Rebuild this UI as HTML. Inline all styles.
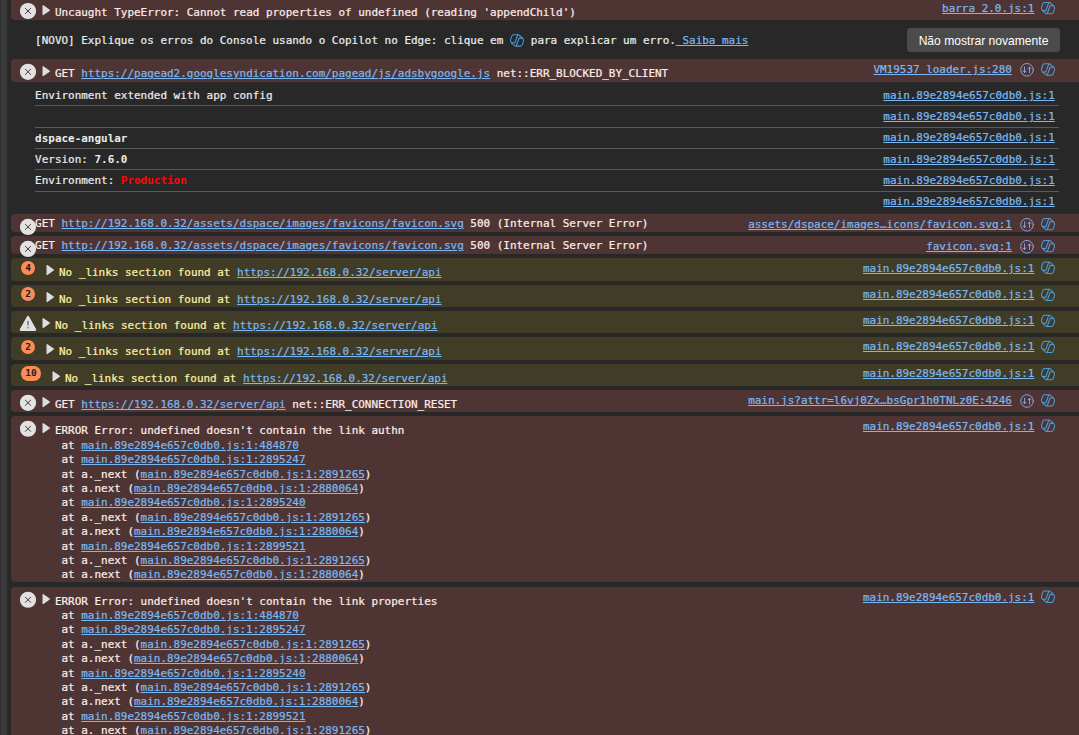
<!DOCTYPE html>
<html lang="pt-BR"><head><meta charset="utf-8"><title>DevTools Console</title>
<style>
html,body{margin:0;padding:0}
body{width:1079px;height:735px;overflow:hidden;background:#282828;position:relative;font-family:"DejaVu Sans Mono","Liberation Mono",monospace;font-size:10.96px;line-height:14.4px;color:#ebebeb}
.gutter{position:absolute;left:0;top:0;width:8px;height:735px;background:linear-gradient(90deg,#313131 0,#313131 0.7px,#3b3b3b 0.7px,#3b3b3b 6.2px,#303030 7px,#282828 7.7px)}
.row{position:absolute;left:11px;width:1080px;border-radius:4px 0 0 4px}
.err{background:#4e3534}
.warn{background:#413c26}
.t{position:absolute;white-space:pre;height:14.4px;-webkit-text-stroke:0.22px currentColor}
.t b{-webkit-text-stroke:0}
.t.e{color:#fdecea}
.t.w{color:#fdf1a8}
.lk{color:#7ab8f3;text-decoration:underline;text-underline-offset:0.5px;text-decoration-thickness:1px}
.ic{position:absolute;overflow:visible}
.sep{position:absolute;left:35px;width:1024px;height:1px;background:#5a5a5a}
.badge{position:absolute;height:14.5px;border-radius:7.25px;background:#fa8c57;color:#1b1b2a;font:bold 9.5px/14.5px "DejaVu Sans Mono",monospace;text-align:center}
.btn{position:absolute;left:907px;top:28px;width:153px;height:24px;border-radius:3px;background:#4b4b4b;color:#fff;font:12.1px/26px "Liberation Sans",sans-serif;text-align:center;box-sizing:border-box;padding-left:0}
b{font-weight:bold}
</style></head>
<body>
<div class="gutter"></div>
<div class="row err" style="top:-2.6px;height:22.3px"></div>
<svg class="ic" style="left:19px;top:2px" width="18" height="18" viewBox="0 0 18 18" ><g transform="translate(0.50 0.50)"><circle cx="8.5" cy="8.5" r="8.1" fill="#e2e2e2"/><path d="M5.9 5.9l5.2 5.2M11.1 5.9l-5.2 5.2" stroke="#4a3837" stroke-width="1" stroke-linecap="round" fill="none"/></g></svg>
<svg class="ic" style="left:42px;top:4px" width="10" height="13" viewBox="0 0 10 13" ><g transform="translate(0.00 0.20)"><path d="M1.1 1.6 L7.4 6 L1.1 10.4 Z" fill="#dedede" stroke="#dedede" stroke-width="1.2" stroke-linejoin="round"/></g></svg>
<div class="t e" style="left:54.9px;top:6.00px;">Uncaught TypeError: Cannot read properties of undefined (reading 'appendChild')</div>
<div class="t " style="right:44.60px;top:1.50px;"><span class="lk">barra 2.0.js:1</span></div>
<svg class="ic" style="left:1040px;top:0px" width="17" height="17" viewBox="0 0 17 17" fill="none" stroke="#489ddc" stroke-width="1.05" stroke-linecap="round" stroke-linejoin="round"><g transform="translate(0.00 0.10)"><path d="M4.4 2.3 H9.6 L13.6 5.7 Q14.9 7 14.4 9 L13.4 12 Q12.8 13.7 11.4 13.7 H6.4 L2.4 10.4 Q1.1 9 1.6 7 L2.7 4 Q3.2 2.3 4.4 2.3 Z"/><path d="M8.7 2.7 L5.9 10.4 H2.6"/><path d="M7.3 13.4 L10.1 5.7 H13.4"/></g></svg>
<div class="t " style="left:35.1px;top:34.20px;">[NOVO] Explique os erros do Console usando o Copilot no Edge: clique em <span style="display:inline-block;width:14.3px"></span> para explicar um erro.<span class="lk"> Saiba mais</span></div>
<svg class="ic" style="left:509px;top:32px" width="17" height="17" viewBox="0 0 17 17" fill="none" stroke="#489ddc" stroke-width="1.05" stroke-linecap="round" stroke-linejoin="round"><g transform="translate(0.00 0.40)"><path d="M4.4 2.3 H9.6 L13.6 5.7 Q14.9 7 14.4 9 L13.4 12 Q12.8 13.7 11.4 13.7 H6.4 L2.4 10.4 Q1.1 9 1.6 7 L2.7 4 Q3.2 2.3 4.4 2.3 Z"/><path d="M8.7 2.7 L5.9 10.4 H2.6"/><path d="M7.3 13.4 L10.1 5.7 H13.4"/></g></svg>
<div class="btn">Não mostrar novamente</div>
<div class="row err" style="top:59px;height:22.900000000000006px"></div>
<svg class="ic" style="left:19px;top:63px" width="18" height="18" viewBox="0 0 18 18" ><g transform="translate(0.50 0.30)"><circle cx="8.5" cy="8.5" r="8.1" fill="#e2e2e2"/><path d="M5.9 5.9l5.2 5.2M11.1 5.9l-5.2 5.2" stroke="#4a3837" stroke-width="1" stroke-linecap="round" fill="none"/></g></svg>
<svg class="ic" style="left:42px;top:65px" width="10" height="13" viewBox="0 0 10 13" ><g transform="translate(0.00 0.20)"><path d="M1.1 1.6 L7.4 6 L1.1 10.4 Z" fill="#dedede" stroke="#dedede" stroke-width="1.2" stroke-linejoin="round"/></g></svg>
<div class="t e" style="left:54.9px;top:67.00px;">GET <span class="lk">https://pagead2.googlesyndication.com/pagead/js/adsbygoogle.js</span> net::ERR_BLOCKED_BY_CLIENT</div>
<div class="t " style="right:67.10px;top:63.00px;"><span class="lk">VM19537 loader.js:280</span></div>
<svg class="ic" style="left:1019px;top:61px" width="17" height="17" viewBox="0 0 17 17" fill="none" stroke="#8caaf5" stroke-width="0.9" stroke-linecap="round" stroke-linejoin="round"><g transform="translate(0.00 0.80)"><circle cx="8" cy="8" r="6.3"/><path d="M5.5 5.2 V10.6 M4.1 9.2 L5.5 10.8 L6.9 9.2"/><path d="M10.5 10.8 V5.4 M9.1 6.8 L10.5 5.2 L11.9 6.8"/></g></svg>
<svg class="ic" style="left:1040px;top:61px" width="17" height="17" viewBox="0 0 17 17" fill="none" stroke="#489ddc" stroke-width="1.05" stroke-linecap="round" stroke-linejoin="round"><g transform="translate(0.00 0.50)"><path d="M4.4 2.3 H9.6 L13.6 5.7 Q14.9 7 14.4 9 L13.4 12 Q12.8 13.7 11.4 13.7 H6.4 L2.4 10.4 Q1.1 9 1.6 7 L2.7 4 Q3.2 2.3 4.4 2.3 Z"/><path d="M8.7 2.7 L5.9 10.4 H2.6"/><path d="M7.3 13.4 L10.1 5.7 H13.4"/></g></svg>
<div class="sep" style="top:105px"></div>
<div class="sep" style="top:127px"></div>
<div class="sep" style="top:148px"></div>
<div class="sep" style="top:169px"></div>
<div class="sep" style="top:191px"></div>
<div class="t " style="left:35.1px;top:89.00px;">Environment extended with app config</div>
<div class="t " style="right:24.20px;top:89.00px;"><span class="lk">main.89e2894e657c0db0.js:1</span></div>
<div class="t " style="right:24.20px;top:110.00px;"><span class="lk">main.89e2894e657c0db0.js:1</span></div>
<div class="t " style="left:35.1px;top:132.00px;"><b>dspace-angular</b></div>
<div class="t " style="right:24.20px;top:131.00px;"><span class="lk">main.89e2894e657c0db0.js:1</span></div>
<div class="t " style="left:35.1px;top:153.00px;">Version: <b>7.6.0</b></div>
<div class="t " style="right:24.20px;top:153.00px;"><span class="lk">main.89e2894e657c0db0.js:1</span></div>
<div class="t " style="left:35.1px;top:174.00px;">Environment: <b style="color:#ff0505">Production</b></div>
<div class="t " style="right:24.20px;top:174.00px;"><span class="lk">main.89e2894e657c0db0.js:1</span></div>
<div class="t " style="right:24.20px;top:195.00px;"><span class="lk">main.89e2894e657c0db0.js:1</span></div>
<div class="row err" style="top:214px;height:18px"></div>
<svg class="ic" style="left:19px;top:218px" width="18" height="18" viewBox="0 0 18 18" ><g transform="translate(0.50 0.40)"><circle cx="8.5" cy="8.5" r="8.1" fill="#e2e2e2"/><path d="M5.9 5.9l5.2 5.2M11.1 5.9l-5.2 5.2" stroke="#4a3837" stroke-width="1" stroke-linecap="round" fill="none"/></g></svg>
<div class="t e" style="left:35.1px;top:217.00px;">GET <span class="lk">http://192.168.0.32/assets/dspace/images/favicons/favicon.svg</span> 500 (Internal Server Error)</div>
<div class="t " style="right:67.10px;top:217.50px;"><span class="lk">assets/dspace/images…icons/favicon.svg:1</span></div>
<svg class="ic" style="left:1019px;top:216px" width="17" height="17" viewBox="0 0 17 17" fill="none" stroke="#8caaf5" stroke-width="0.9" stroke-linecap="round" stroke-linejoin="round"><g transform="translate(0.00 0.75)"><circle cx="8" cy="8" r="6.3"/><path d="M5.5 5.2 V10.6 M4.1 9.2 L5.5 10.8 L6.9 9.2"/><path d="M10.5 10.8 V5.4 M9.1 6.8 L10.5 5.2 L11.9 6.8"/></g></svg>
<svg class="ic" style="left:1040px;top:216px" width="17" height="17" viewBox="0 0 17 17" fill="none" stroke="#489ddc" stroke-width="1.05" stroke-linecap="round" stroke-linejoin="round"><g transform="translate(0.00 0.10)"><path d="M4.4 2.3 H9.6 L13.6 5.7 Q14.9 7 14.4 9 L13.4 12 Q12.8 13.7 11.4 13.7 H6.4 L2.4 10.4 Q1.1 9 1.6 7 L2.7 4 Q3.2 2.3 4.4 2.3 Z"/><path d="M8.7 2.7 L5.9 10.4 H2.6"/><path d="M7.3 13.4 L10.1 5.7 H13.4"/></g></svg>
<div class="row err" style="top:236px;height:18px"></div>
<svg class="ic" style="left:19px;top:240px" width="18" height="18" viewBox="0 0 18 18" ><g transform="translate(0.50 0.40)"><circle cx="8.5" cy="8.5" r="8.1" fill="#e2e2e2"/><path d="M5.9 5.9l5.2 5.2M11.1 5.9l-5.2 5.2" stroke="#4a3837" stroke-width="1" stroke-linecap="round" fill="none"/></g></svg>
<div class="t e" style="left:35.1px;top:239.00px;">GET <span class="lk">http://192.168.0.32/assets/dspace/images/favicons/favicon.svg</span> 500 (Internal Server Error)</div>
<div class="t " style="right:67.10px;top:239.50px;"><span class="lk">favicon.svg:1</span></div>
<svg class="ic" style="left:1019px;top:238px" width="17" height="17" viewBox="0 0 17 17" fill="none" stroke="#8caaf5" stroke-width="0.9" stroke-linecap="round" stroke-linejoin="round"><g transform="translate(0.00 0.75)"><circle cx="8" cy="8" r="6.3"/><path d="M5.5 5.2 V10.6 M4.1 9.2 L5.5 10.8 L6.9 9.2"/><path d="M10.5 10.8 V5.4 M9.1 6.8 L10.5 5.2 L11.9 6.8"/></g></svg>
<svg class="ic" style="left:1040px;top:238px" width="17" height="17" viewBox="0 0 17 17" fill="none" stroke="#489ddc" stroke-width="1.05" stroke-linecap="round" stroke-linejoin="round"><g transform="translate(0.00 0.10)"><path d="M4.4 2.3 H9.6 L13.6 5.7 Q14.9 7 14.4 9 L13.4 12 Q12.8 13.7 11.4 13.7 H6.4 L2.4 10.4 Q1.1 9 1.6 7 L2.7 4 Q3.2 2.3 4.4 2.3 Z"/><path d="M8.7 2.7 L5.9 10.4 H2.6"/><path d="M7.3 13.4 L10.1 5.7 H13.4"/></g></svg>
<div class="row warn" style="top:258px;height:23px"></div>
<div class="badge" style="left:20.75px;top:260.85px;width:14.5px">4</div>
<svg class="ic" style="left:46px;top:264px" width="10" height="13" viewBox="0 0 10 13" ><g transform="translate(0.00 0.00)"><path d="M1.1 1.6 L7.4 6 L1.1 10.4 Z" fill="#dedede" stroke="#dedede" stroke-width="1.2" stroke-linejoin="round"/></g></svg>
<div class="t w" style="left:59px;top:265.80px;">No _links section found at <span class="lk">https://192.168.0.32/server/api</span></div>
<div class="t " style="right:44.60px;top:262.00px;"><span class="lk">main.89e2894e657c0db0.js:1</span></div>
<svg class="ic" style="left:1040px;top:259px" width="17" height="17" viewBox="0 0 17 17" fill="none" stroke="#489ddc" stroke-width="1.05" stroke-linecap="round" stroke-linejoin="round"><g transform="translate(0.00 0.80)"><path d="M4.4 2.3 H9.6 L13.6 5.7 Q14.9 7 14.4 9 L13.4 12 Q12.8 13.7 11.4 13.7 H6.4 L2.4 10.4 Q1.1 9 1.6 7 L2.7 4 Q3.2 2.3 4.4 2.3 Z"/><path d="M8.7 2.7 L5.9 10.4 H2.6"/><path d="M7.3 13.4 L10.1 5.7 H13.4"/></g></svg>
<div class="row warn" style="top:285px;height:22px"></div>
<div class="badge" style="left:20.75px;top:286.95px;width:14.5px">2</div>
<svg class="ic" style="left:46px;top:291px" width="10" height="13" viewBox="0 0 10 13" ><g transform="translate(0.00 0.10)"><path d="M1.1 1.6 L7.4 6 L1.1 10.4 Z" fill="#dedede" stroke="#dedede" stroke-width="1.2" stroke-linejoin="round"/></g></svg>
<div class="t w" style="left:59px;top:292.90px;">No _links section found at <span class="lk">https://192.168.0.32/server/api</span></div>
<div class="t " style="right:44.60px;top:288.00px;"><span class="lk">main.89e2894e657c0db0.js:1</span></div>
<svg class="ic" style="left:1040px;top:286px" width="17" height="17" viewBox="0 0 17 17" fill="none" stroke="#489ddc" stroke-width="1.05" stroke-linecap="round" stroke-linejoin="round"><g transform="translate(0.00 0.90)"><path d="M4.4 2.3 H9.6 L13.6 5.7 Q14.9 7 14.4 9 L13.4 12 Q12.8 13.7 11.4 13.7 H6.4 L2.4 10.4 Q1.1 9 1.6 7 L2.7 4 Q3.2 2.3 4.4 2.3 Z"/><path d="M8.7 2.7 L5.9 10.4 H2.6"/><path d="M7.3 13.4 L10.1 5.7 H13.4"/></g></svg>
<div class="row warn" style="top:311px;height:22px"></div>
<svg class="ic" style="left:19px;top:314px" width="19" height="18" viewBox="0 0 19 18" ><g transform="translate(0.00 0.80)"><path d="M9 2.3 L16.1 15 H1.9 Z" fill="#e1e1e1" stroke="#e1e1e1" stroke-width="2.4" stroke-linejoin="round"/><path d="M9 6.2 V10.8" stroke="#6f6a56" stroke-width="1.4" fill="none"/><circle cx="9" cy="12.9" r="0.8" fill="#6f6a56"/></g></svg>
<svg class="ic" style="left:42px;top:317px" width="10" height="13" viewBox="0 0 10 13" ><g transform="translate(0.00 0.10)"><path d="M1.1 1.6 L7.4 6 L1.1 10.4 Z" fill="#dedede" stroke="#dedede" stroke-width="1.2" stroke-linejoin="round"/></g></svg>
<div class="t w" style="left:55px;top:318.90px;">No _links section found at <span class="lk">https://192.168.0.32/server/api</span></div>
<div class="t " style="right:44.60px;top:314.00px;"><span class="lk">main.89e2894e657c0db0.js:1</span></div>
<svg class="ic" style="left:1040px;top:312px" width="17" height="17" viewBox="0 0 17 17" fill="none" stroke="#489ddc" stroke-width="1.05" stroke-linecap="round" stroke-linejoin="round"><g transform="translate(0.00 0.90)"><path d="M4.4 2.3 H9.6 L13.6 5.7 Q14.9 7 14.4 9 L13.4 12 Q12.8 13.7 11.4 13.7 H6.4 L2.4 10.4 Q1.1 9 1.6 7 L2.7 4 Q3.2 2.3 4.4 2.3 Z"/><path d="M8.7 2.7 L5.9 10.4 H2.6"/><path d="M7.3 13.4 L10.1 5.7 H13.4"/></g></svg>
<div class="row warn" style="top:337px;height:23px"></div>
<div class="badge" style="left:20.75px;top:339.95px;width:14.5px">2</div>
<svg class="ic" style="left:46px;top:343px" width="10" height="13" viewBox="0 0 10 13" ><g transform="translate(0.00 0.10)"><path d="M1.1 1.6 L7.4 6 L1.1 10.4 Z" fill="#dedede" stroke="#dedede" stroke-width="1.2" stroke-linejoin="round"/></g></svg>
<div class="t w" style="left:59px;top:344.90px;">No _links section found at <span class="lk">https://192.168.0.32/server/api</span></div>
<div class="t " style="right:44.60px;top:340.00px;"><span class="lk">main.89e2894e657c0db0.js:1</span></div>
<svg class="ic" style="left:1040px;top:338px" width="17" height="17" viewBox="0 0 17 17" fill="none" stroke="#489ddc" stroke-width="1.05" stroke-linecap="round" stroke-linejoin="round"><g transform="translate(0.00 0.90)"><path d="M4.4 2.3 H9.6 L13.6 5.7 Q14.9 7 14.4 9 L13.4 12 Q12.8 13.7 11.4 13.7 H6.4 L2.4 10.4 Q1.1 9 1.6 7 L2.7 4 Q3.2 2.3 4.4 2.3 Z"/><path d="M8.7 2.7 L5.9 10.4 H2.6"/><path d="M7.3 13.4 L10.1 5.7 H13.4"/></g></svg>
<div class="row warn" style="top:364px;height:22px"></div>
<div class="badge" style="left:21.0px;top:366.15px;width:20px">10</div>
<svg class="ic" style="left:52px;top:370px" width="10" height="13" viewBox="0 0 10 13" ><g transform="translate(0.00 0.30)"><path d="M1.1 1.6 L7.4 6 L1.1 10.4 Z" fill="#dedede" stroke="#dedede" stroke-width="1.2" stroke-linejoin="round"/></g></svg>
<div class="t w" style="left:65px;top:372.10px;">No _links section found at <span class="lk">https://192.168.0.32/server/api</span></div>
<div class="t " style="right:44.60px;top:367.00px;"><span class="lk">main.89e2894e657c0db0.js:1</span></div>
<svg class="ic" style="left:1040px;top:366px" width="17" height="17" viewBox="0 0 17 17" fill="none" stroke="#489ddc" stroke-width="1.05" stroke-linecap="round" stroke-linejoin="round"><g transform="translate(0.00 0.10)"><path d="M4.4 2.3 H9.6 L13.6 5.7 Q14.9 7 14.4 9 L13.4 12 Q12.8 13.7 11.4 13.7 H6.4 L2.4 10.4 Q1.1 9 1.6 7 L2.7 4 Q3.2 2.3 4.4 2.3 Z"/><path d="M8.7 2.7 L5.9 10.4 H2.6"/><path d="M7.3 13.4 L10.1 5.7 H13.4"/></g></svg>
<div class="row err" style="top:390px;height:22px"></div>
<svg class="ic" style="left:19px;top:394px" width="18" height="18" viewBox="0 0 18 18" ><g transform="translate(0.50 0.30)"><circle cx="8.5" cy="8.5" r="8.1" fill="#e2e2e2"/><path d="M5.9 5.9l5.2 5.2M11.1 5.9l-5.2 5.2" stroke="#4a3837" stroke-width="1" stroke-linecap="round" fill="none"/></g></svg>
<svg class="ic" style="left:42px;top:396px" width="10" height="13" viewBox="0 0 10 13" ><g transform="translate(0.00 0.10)"><path d="M1.1 1.6 L7.4 6 L1.1 10.4 Z" fill="#dedede" stroke="#dedede" stroke-width="1.2" stroke-linejoin="round"/></g></svg>
<div class="t e" style="left:54.9px;top:398.00px;">GET <span class="lk">https://192.168.0.32/server/api</span> net::ERR_CONNECTION_RESET</div>
<div class="t " style="right:67.10px;top:393.75px;"><span class="lk">main.js?attr=l6vj0Zx…bsGpr1h0TNLz0E:4246</span></div>
<svg class="ic" style="left:1019px;top:393px" width="17" height="17" viewBox="0 0 17 17" fill="none" stroke="#8caaf5" stroke-width="0.9" stroke-linecap="round" stroke-linejoin="round"><g transform="translate(0.00 0.00)"><circle cx="8" cy="8" r="6.3"/><path d="M5.5 5.2 V10.6 M4.1 9.2 L5.5 10.8 L6.9 9.2"/><path d="M10.5 10.8 V5.4 M9.1 6.8 L10.5 5.2 L11.9 6.8"/></g></svg>
<svg class="ic" style="left:1040px;top:392px" width="17" height="17" viewBox="0 0 17 17" fill="none" stroke="#489ddc" stroke-width="1.05" stroke-linecap="round" stroke-linejoin="round"><g transform="translate(0.00 0.35)"><path d="M4.4 2.3 H9.6 L13.6 5.7 Q14.9 7 14.4 9 L13.4 12 Q12.8 13.7 11.4 13.7 H6.4 L2.4 10.4 Q1.1 9 1.6 7 L2.7 4 Q3.2 2.3 4.4 2.3 Z"/><path d="M8.7 2.7 L5.9 10.4 H2.6"/><path d="M7.3 13.4 L10.1 5.7 H13.4"/></g></svg>
<div class="row err" style="top:416px;height:166px"></div>
<svg class="ic" style="left:19px;top:420px" width="18" height="18" viewBox="0 0 18 18" ><g transform="translate(0.50 0.25)"><circle cx="8.5" cy="8.5" r="8.1" fill="#e2e2e2"/><path d="M5.9 5.9l5.2 5.2M11.1 5.9l-5.2 5.2" stroke="#4a3837" stroke-width="1" stroke-linecap="round" fill="none"/></g></svg>
<svg class="ic" style="left:42px;top:422px" width="10" height="13" viewBox="0 0 10 13" ><g transform="translate(0.00 0.05)"><path d="M1.1 1.6 L7.4 6 L1.1 10.4 Z" fill="#dedede" stroke="#dedede" stroke-width="1.2" stroke-linejoin="round"/></g></svg>
<div class="t e" style="left:54.9px;top:424.00px;">ERROR Error: undefined doesn't contain the link authn</div>
<div class="t e" style="left:35.1px;top:439.00px;">    at <span class="lk">main.89e2894e657c0db0.js:1:484870</span></div>
<div class="t e" style="left:35.1px;top:453.00px;">    at <span class="lk">main.89e2894e657c0db0.js:1:2895247</span></div>
<div class="t e" style="left:35.1px;top:468.00px;">    at a._next (<span class="lk">main.89e2894e657c0db0.js:1:2891265</span>)</div>
<div class="t e" style="left:35.1px;top:482.00px;">    at a.next (<span class="lk">main.89e2894e657c0db0.js:1:2880064</span>)</div>
<div class="t e" style="left:35.1px;top:496.00px;">    at <span class="lk">main.89e2894e657c0db0.js:1:2895240</span></div>
<div class="t e" style="left:35.1px;top:511.00px;">    at a._next (<span class="lk">main.89e2894e657c0db0.js:1:2891265</span>)</div>
<div class="t e" style="left:35.1px;top:525.00px;">    at a.next (<span class="lk">main.89e2894e657c0db0.js:1:2880064</span>)</div>
<div class="t e" style="left:35.1px;top:540.00px;">    at <span class="lk">main.89e2894e657c0db0.js:1:2899521</span></div>
<div class="t e" style="left:35.1px;top:554.00px;">    at a._next (<span class="lk">main.89e2894e657c0db0.js:1:2891265</span>)</div>
<div class="t e" style="left:35.1px;top:568.00px;">    at a.next (<span class="lk">main.89e2894e657c0db0.js:1:2880064</span>)</div>
<div class="t " style="right:44.60px;top:420.00px;"><span class="lk">main.89e2894e657c0db0.js:1</span></div>
<svg class="ic" style="left:1040px;top:417px" width="17" height="17" viewBox="0 0 17 17" fill="none" stroke="#489ddc" stroke-width="1.05" stroke-linecap="round" stroke-linejoin="round"><g transform="translate(0.00 0.80)"><path d="M4.4 2.3 H9.6 L13.6 5.7 Q14.9 7 14.4 9 L13.4 12 Q12.8 13.7 11.4 13.7 H6.4 L2.4 10.4 Q1.1 9 1.6 7 L2.7 4 Q3.2 2.3 4.4 2.3 Z"/><path d="M8.7 2.7 L5.9 10.4 H2.6"/><path d="M7.3 13.4 L10.1 5.7 H13.4"/></g></svg>
<div class="row err" style="top:587px;height:173px"></div>
<svg class="ic" style="left:19px;top:591px" width="18" height="18" viewBox="0 0 18 18" ><g transform="translate(0.50 0.25)"><circle cx="8.5" cy="8.5" r="8.1" fill="#e2e2e2"/><path d="M5.9 5.9l5.2 5.2M11.1 5.9l-5.2 5.2" stroke="#4a3837" stroke-width="1" stroke-linecap="round" fill="none"/></g></svg>
<svg class="ic" style="left:42px;top:593px" width="10" height="13" viewBox="0 0 10 13" ><g transform="translate(0.00 0.05)"><path d="M1.1 1.6 L7.4 6 L1.1 10.4 Z" fill="#dedede" stroke="#dedede" stroke-width="1.2" stroke-linejoin="round"/></g></svg>
<div class="t e" style="left:54.9px;top:595.00px;">ERROR Error: undefined doesn't contain the link properties</div>
<div class="t e" style="left:35.1px;top:609.00px;">    at <span class="lk">main.89e2894e657c0db0.js:1:484870</span></div>
<div class="t e" style="left:35.1px;top:623.00px;">    at <span class="lk">main.89e2894e657c0db0.js:1:2895247</span></div>
<div class="t e" style="left:35.1px;top:638.00px;">    at a._next (<span class="lk">main.89e2894e657c0db0.js:1:2891265</span>)</div>
<div class="t e" style="left:35.1px;top:652.00px;">    at a.next (<span class="lk">main.89e2894e657c0db0.js:1:2880064</span>)</div>
<div class="t e" style="left:35.1px;top:667.00px;">    at <span class="lk">main.89e2894e657c0db0.js:1:2895240</span></div>
<div class="t e" style="left:35.1px;top:681.00px;">    at a._next (<span class="lk">main.89e2894e657c0db0.js:1:2891265</span>)</div>
<div class="t e" style="left:35.1px;top:695.00px;">    at a.next (<span class="lk">main.89e2894e657c0db0.js:1:2880064</span>)</div>
<div class="t e" style="left:35.1px;top:710.00px;">    at <span class="lk">main.89e2894e657c0db0.js:1:2899521</span></div>
<div class="t e" style="left:35.1px;top:724.00px;">    at a._next (<span class="lk">main.89e2894e657c0db0.js:1:2891265</span>)</div>
<div class="t e" style="left:35.1px;top:739.00px;">    at a.next (<span class="lk">main.89e2894e657c0db0.js:1:2880064</span>)</div>
<div class="t " style="right:44.60px;top:591.00px;"><span class="lk">main.89e2894e657c0db0.js:1</span></div>
<svg class="ic" style="left:1040px;top:588px" width="17" height="17" viewBox="0 0 17 17" fill="none" stroke="#489ddc" stroke-width="1.05" stroke-linecap="round" stroke-linejoin="round"><g transform="translate(0.00 0.75)"><path d="M4.4 2.3 H9.6 L13.6 5.7 Q14.9 7 14.4 9 L13.4 12 Q12.8 13.7 11.4 13.7 H6.4 L2.4 10.4 Q1.1 9 1.6 7 L2.7 4 Q3.2 2.3 4.4 2.3 Z"/><path d="M8.7 2.7 L5.9 10.4 H2.6"/><path d="M7.3 13.4 L10.1 5.7 H13.4"/></g></svg>
</body></html>
